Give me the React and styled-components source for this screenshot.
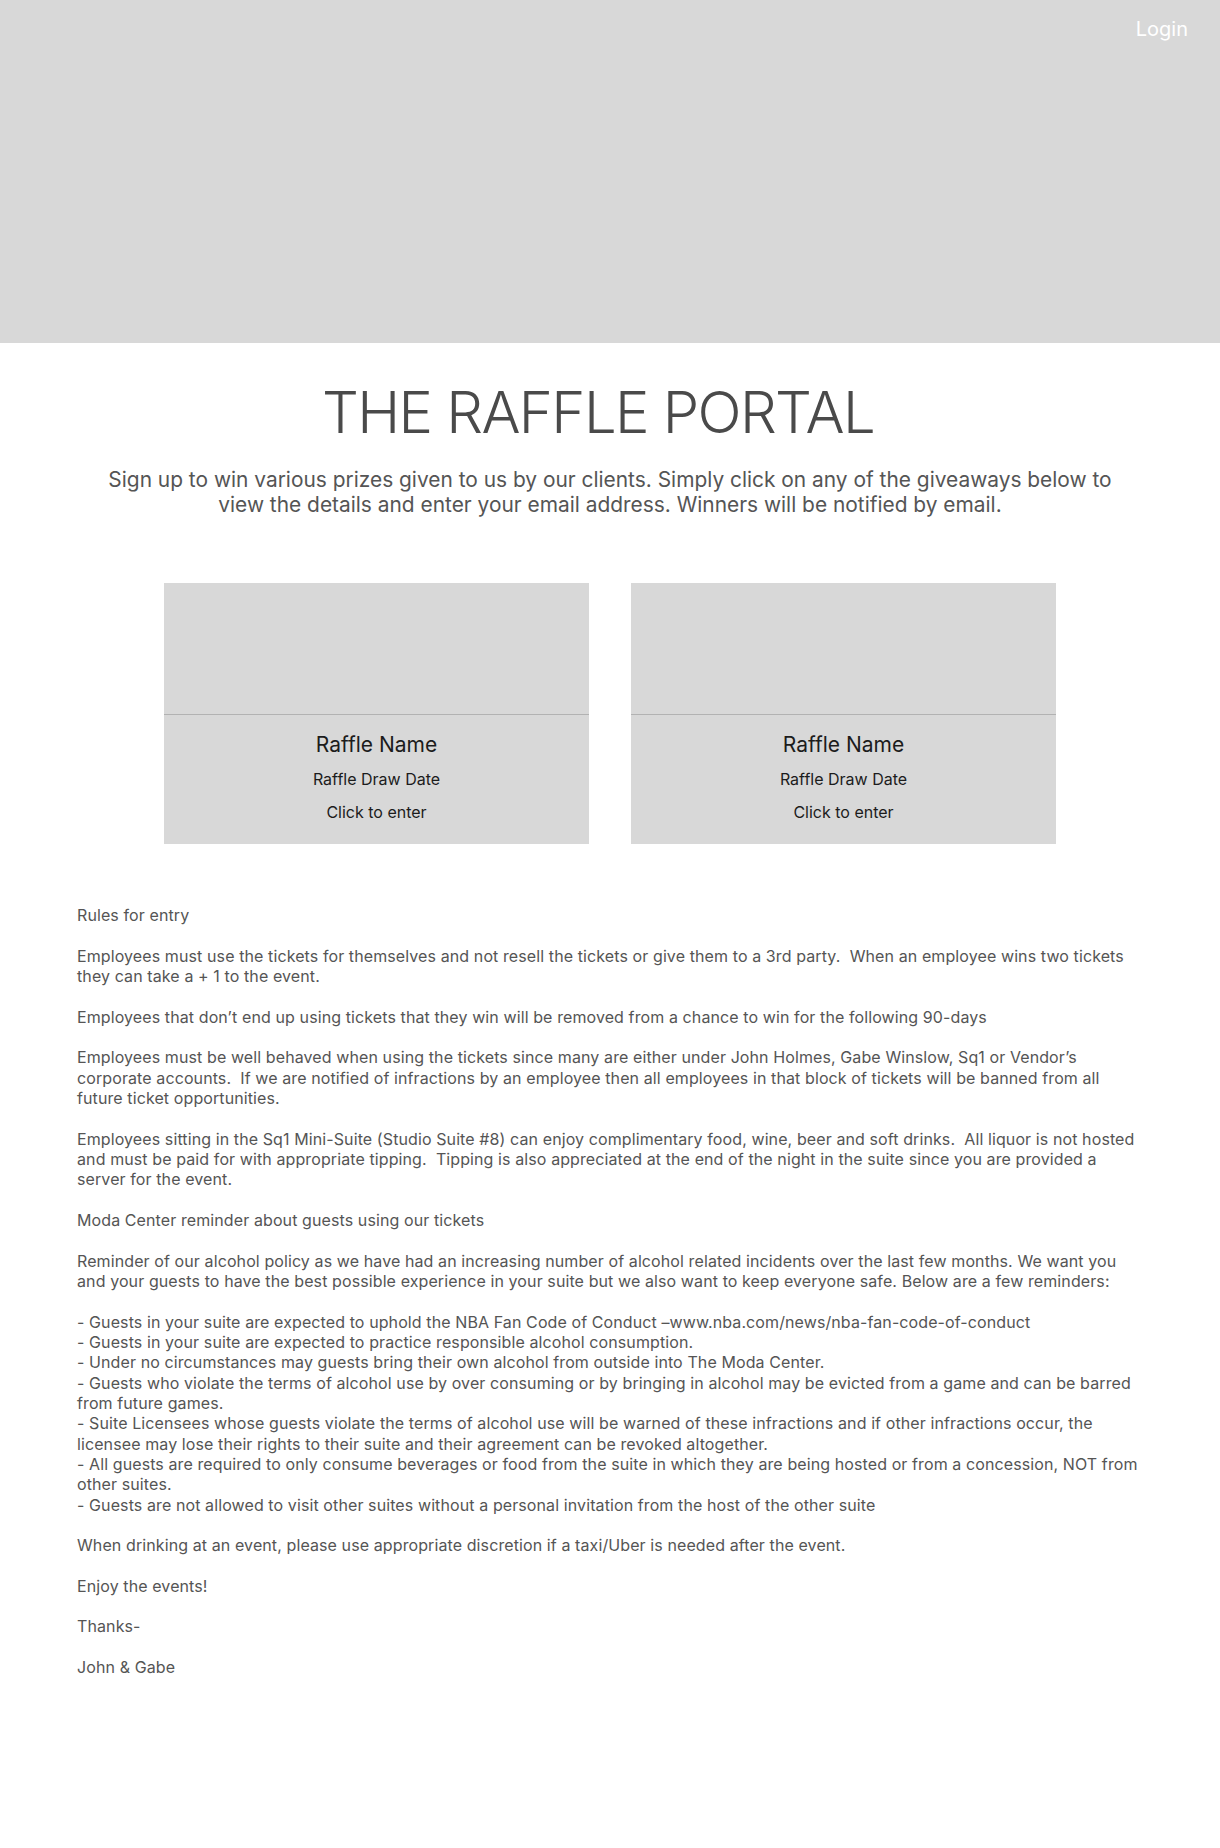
import React from "react"
import styled, { createGlobalStyle } from "styled-components"

const GlobalStyle = createGlobalStyle`
  html, body {
    margin: 0;
    padding: 0;
    background: #fff;
  }
  body {
    font-family: Inter, "Open Sans", Roboto, sans-serif;
    color: #4a4a4a;
    -webkit-font-smoothing: antialiased;
  }
`

const Page = styled.div`
  width: 100%;
  min-height: 1848px;
  background: #fff;
`

const Hero = styled.header`
  height: 343px;
  background-color: #d8d8d8;
  display: flex;
  justify-content: flex-end;
  align-items: flex-start;
  padding: 15px 32px 0 0;
  box-sizing: border-box;
`

const LoginLink = styled.a`
  color: #fff;
  font-size: 20px;
  line-height: 28px;
  font-weight: 400;
  text-decoration: none;
  cursor: pointer;
`

const Intro = styled.section`
  display: flex;
  flex-direction: column;
  align-items: center;
  text-align: center;
  padding: 34px 77px 0;
`

const Title = styled.h1`
  margin: 0 24px 0 0;
  font-size: 58px;
  line-height: 70px;
  font-weight: 300;
  letter-spacing: -1.6px;
  color: #4a4a4a;
`

const Lead = styled.p`
  margin: 20px 0 0;
  max-width: 1030px;
  font-size: 20.9px;
  line-height: 25px;
  font-weight: 400;
  color: #555;
`

const Cards = styled.div`
  display: flex;
  justify-content: center;
  gap: 42px;
  margin-top: 66px;
`

const Card = styled.a`
  width: 425px;
  height: 261px;
  background: #d8d8d8;
  display: flex;
  flex-direction: column;
  cursor: pointer;
  text-decoration: none;
`

const CardImage = styled.div`
  height: 131px;
  border-bottom: 1.5px solid #b2b2b2;
`

const CardBody = styled.div`
  flex: 1;
  display: flex;
  flex-direction: column;
  align-items: center;
  padding-top: 16px;
  color: #1c1c1c;
`

const CardName = styled.div`
  font-size: 21px;
  line-height: 28px;
`

const CardMeta = styled.div`
  font-size: 16px;
  line-height: 20px;
  margin-top: ${(p) => p.$gap}px;
`

const Rules = styled.section`
  padding: 61px 77px 0;
  font-size: 16px;
  letter-spacing: 0.1px;
  line-height: 20.33px;
  color: #555;
`

const Para = styled.p`
  margin: 0 0 20.33px;
`

const Line = styled.span`
  display: block;
`

const raffles = [
  { name: "Raffle Name", date: "Raffle Draw Date" },
  { name: "Raffle Name", date: "Raffle Draw Date" },
]

const reminders = [
  "- Guests in your suite are expected to uphold the NBA Fan Code of Conduct \u2013www.nba.com/news/nba-fan-code-of-conduct",
  "- Guests in your suite are expected to practice responsible alcohol consumption.",
  "- Under no circumstances may guests bring their own alcohol from outside into The Moda Center.",
  "- Guests who violate the terms of alcohol use by over consuming or by bringing in alcohol may be evicted from a game and can be barred from future games.",
  "- Suite Licensees whose guests violate the terms of alcohol use will be warned of these infractions and if other infractions occur, the licensee may lose their rights to their suite and their agreement can be revoked altogether.",
  "- All guests are required to only consume beverages or food from the suite in which they are being hosted or from a concession, NOT from other suites.",
  "- Guests are not allowed to visit other suites without a personal invitation from the host of the other suite",
]

const App = () => {
  return (
    <Page>
      <GlobalStyle />
      <Hero>
        <LoginLink>Login</LoginLink>
      </Hero>
      <Intro>
        <Title>THE RAFFLE PORTAL</Title>
        <Lead>
          Sign up to win various prizes given to us by our clients. Simply click on any of the giveaways below to
          view the details and enter your email address. Winners will be notified by email.
        </Lead>
      </Intro>
      <Cards>
        {raffles.map((r, i) => (
          <Card key={i}>
            <CardImage />
            <CardBody>
              <CardName>{r.name}</CardName>
              <CardMeta $gap={10}>{r.date}</CardMeta>
              <CardMeta $gap={13}>Click to enter</CardMeta>
            </CardBody>
          </Card>
        ))}
      </Cards>
      <Rules>
        <Para>Rules for entry</Para>
        <Para>
          Employees must use the tickets for themselves and not resell the tickets or give them to a 3rd party.&nbsp;
          When an employee wins two tickets they can take a + 1 to the event.
        </Para>
        <Para>
          Employees that don’t end up using tickets that they win will be removed from a chance to win for the
          following 90-days
        </Para>
        <Para>
          Employees must be well behaved when using the tickets since many are either under John Holmes, Gabe
          Winslow, Sq1 or Vendor’s corporate accounts.&nbsp; If we are notified of infractions by an employee then all
          employees in that block of tickets will be banned from all future ticket opportunities.
        </Para>
        <Para>
          Employees sitting in the Sq1 Mini-Suite (Studio Suite #8) can enjoy complimentary food, wine, beer and soft
          drinks.&nbsp; All liquor is not hosted and must be paid for with appropriate tipping.&nbsp; Tipping is also
          appreciated at the end of the night in the suite since you are provided a server for the event.
        </Para>
        <Para>Moda Center reminder about guests using our tickets</Para>
        <Para>
          Reminder of our alcohol policy as we have had an increasing number of alcohol related incidents over the
          last few months. We want you and your guests to have the best possible experience in your suite but we also
          want to keep everyone safe. Below are a few reminders:
        </Para>
        <Para>
          {reminders.map((t, i) => (
            <Line key={i}>{t}</Line>
          ))}
        </Para>
        <Para>When drinking at an event, please use appropriate discretion if a taxi/Uber is needed after the event.</Para>
        <Para>Enjoy the events!</Para>
        <Para>Thanks-</Para>
        <Para>John &amp; Gabe</Para>
      </Rules>
    </Page>
  )
}

export default App
